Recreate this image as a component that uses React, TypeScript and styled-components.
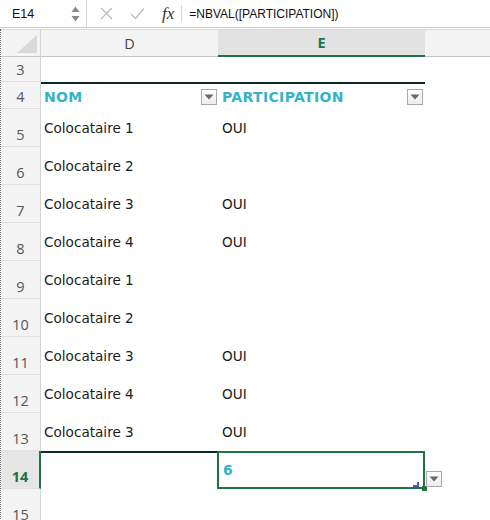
import * as React from 'react';
import styled, { createGlobalStyle } from 'styled-components';

const GlobalStyle = createGlobalStyle`
  body {
    margin: 0;
    background: #fff;
    font-family: "DejaVu Sans", Verdana, sans-serif;
  }
`;

const colors = {
  green: '#217346',
  teal: '#34b3c8',
  text: '#1b1b1b',
  head: '#f4f4f4',
  headLine: '#e1e1e1',
  dark: '#0d2626',
};

const Window = styled.div`
  width: 490px;
  height: 520px;
  overflow: hidden;
  background: #fff;
`;

const FormulaBar = styled.div`
  display: flex;
  align-items: center;
  height: 27px;
  border-bottom: 1px solid #c8c8c8;
  font-family: "Liberation Sans", Arial, sans-serif;
  font-size: 12px;
  color: #111;
`;

const NameBox = styled.div`
  display: flex;
  align-items: center;
  justify-content: space-between;
  width: 87px;
  height: 100%;
  box-sizing: border-box;
  padding: 0 6px 0 12px;
  border-right: 1px solid #d8d8d8;
  font-size: 12.5px;
`;

const BarIcon = styled.span<{ $left: number }>`
  display: flex;
  align-items: center;
  margin-left: ${({ $left }) => $left}px;
`;

const Fx = styled.span`
  margin-left: 17px;
  padding-right: 7px;
  border-right: 1px solid #d8d8d8;
  font-family: "Liberation Serif", "Times New Roman", serif;
  font-style: italic;
  font-size: 17px;
  color: #333;
  line-height: 17px;
`;

const Formula = styled.span`
  margin-left: 7px;
`;

const Sheet = styled.div`
  margin-top: 1px;
  border-left: 1px dotted #666;
`;

const Row = styled.div<{ $h: number }>`
  display: flex;
  height: ${({ $h }) => $h}px;
`;

const Corner = styled.div`
  width: 40px;
  box-sizing: border-box;
  border-right: 1px solid #d4d4d4;
  border-top: 1px solid #d6d6d6;
  border-bottom: 1px solid #c8c8c8;
  background: ${colors.head};
  display: flex;
  align-items: flex-end;
  justify-content: flex-end;
  padding: 0 3px 3px 0;
`;

const ColHead = styled.div<{ $w?: number; $active?: boolean }>`
  ${({ $w }) => ($w ? `width: ${$w}px;` : 'flex: 1;')}
  box-sizing: border-box;
  display: flex;
  align-items: center;
  justify-content: center;
  border-top: 1px solid #d6d6d6;
  border-bottom: ${({ $active }) => ($active ? `2px solid ${colors.green}` : '1px solid #c4c4c4')};
  background: ${({ $active }) => ($active ? '#e2e2e2' : colors.head)};
  color: ${({ $active }) => ($active ? colors.green : '#444')};
  font-family: "Open Sans", Arial, sans-serif;
  font-weight: ${({ $active }) => ($active ? 700 : 400)};
  font-size: 14.5px;
`;

const RowHead = styled.div<{ $active?: boolean }>`
  width: 40px;
  flex-shrink: 0;
  box-sizing: border-box;
  display: flex;
  align-items: flex-end;
  justify-content: center;
  padding-bottom: 2px;
  border-right: ${({ $active }) => ($active ? `2px solid ${colors.green}` : '1px solid #d4d4d4')};
  border-bottom: 1px solid ${colors.headLine};
  background: ${({ $active }) => ($active ? '#e6e6e6' : colors.head)};
  color: ${({ $active }) => ($active ? colors.green : '#555')};
  font-family: "Open Sans", Arial, sans-serif;
  font-weight: ${({ $active }) => ($active ? 700 : 400)};
  font-size: 14.5px;
`;

const Cell = styled.div<{ $w: number; $top?: boolean; $pad?: number }>`
  width: ${({ $w }) => $w}px;
  flex-shrink: 0;
  box-sizing: border-box;
  display: flex;
  align-items: center;
  padding-left: ${({ $pad = 3 }) => $pad}px;
  border-top: ${({ $top }) => ($top ? `2px solid ${colors.dark}` : 'none')};
  color: ${colors.text};
  font-size: 13.6px;
`;

const HeaderCell = styled(Cell)`
  justify-content: space-between;
  padding-right: 1px;
  color: ${colors.teal};
  font-weight: 700;
  font-size: 14px;
  letter-spacing: 0.35px;
`;

const SelectedCell = styled(Cell)`
  position: relative;
  border: 2px solid ${colors.green};
  width: ${({ $w }) => $w + 1}px;
  color: ${colors.teal};
  font-weight: 700;
  font-size: 14px;
`;

const FillHandle = styled.span`
  position: absolute;
  right: -4px;
  bottom: -4px;
  width: 5px;
  height: 5px;
  background: ${colors.green};
`;

const CursorMark = styled.span`
  position: absolute;
  right: 4px;
  bottom: 0px;
  width: 3px;
  height: 5px;
  border-right: 2px solid #4a5bb0;
  box-sizing: border-box;
  &:after {
    content: '';
    position: absolute;
    right: 0;
    bottom: 0;
    width: 4px;
    height: 2px;
    background: #4a5bb0;
  }
`;

const FilterButton = styled.span<{ $float?: boolean }>`
  width: 16px;
  height: 16px;
  box-sizing: border-box;
  display: flex;
  align-items: center;
  justify-content: center;
  border: 1px solid #a8a8a8;
  background: linear-gradient(#fefefe, #ececec);
  ${({ $float }) => ($float ? 'position: absolute; right: -19px; bottom: 0;' : '')}
`;

const Filter = ({ float }: { float?: boolean }) => (
  <FilterButton $float={float}>
    <svg width="10" height="6" viewBox="0 0 10 6">
      <polygon points="0.5,0.5 9.5,0.5 5,5.5" fill="#6a6a6a" />
    </svg>
  </FilterButton>
);

const rows = [
  { n: 5, nom: 'Colocataire 1', part: 'OUI' },
  { n: 6, nom: 'Colocataire 2', part: '' },
  { n: 7, nom: 'Colocataire 3', part: 'OUI' },
  { n: 8, nom: 'Colocataire 4', part: 'OUI' },
  { n: 9, nom: 'Colocataire 1', part: '' },
  { n: 10, nom: 'Colocataire 2', part: '' },
  { n: 11, nom: 'Colocataire 3', part: 'OUI' },
  { n: 12, nom: 'Colocataire 4', part: 'OUI' },
  { n: 13, nom: 'Colocataire 3', part: 'OUI' },
];

const D = 177;
const E = 207;

const App = () => (
  <Window>
    <GlobalStyle />
    <FormulaBar>
      <NameBox>
        E14
        <svg width="9" height="18" viewBox="0 0 9 18">
          <polygon points="4.5,1.5 8.5,7 0.5,7" fill="#8a8a8a" />
          <polygon points="0.5,11 8.5,11 4.5,16.5" fill="#8a8a8a" />
        </svg>
      </NameBox>
      <BarIcon $left={13}>
        <svg width="13" height="13" viewBox="0 0 13 13">
          <path d="M1 1 L12 12 M12 1 L1 12" stroke="#bdbdbd" strokeWidth="1.4" />
        </svg>
      </BarIcon>
      <BarIcon $left={17}>
        <svg width="15" height="13" viewBox="0 0 15 13">
          <path d="M1 7 L5.5 11.5 L14 1.5" stroke="#bdbdbd" strokeWidth="1.4" fill="none" />
        </svg>
      </BarIcon>
      <Fx>fx</Fx>
      <Formula>=NBVAL([PARTICIPATION])</Formula>
    </FormulaBar>

    <Sheet>
      <Row $h={28}>
        <Corner>
          <svg width="20" height="18" viewBox="0 0 20 18">
            <polygon points="20,0 20,18 0,18" fill="#d9d9d9" />
          </svg>
        </Corner>
        <ColHead $w={D}>D</ColHead>
        <ColHead $w={E} $active>E</ColHead>
        <ColHead />
      </Row>

      <Row $h={25}>
        <RowHead>3</RowHead>
      </Row>

      <Row $h={27}>
        <RowHead>4</RowHead>
        <HeaderCell $w={D} $top>
          NOM
          <Filter />
        </HeaderCell>
        <HeaderCell $w={E} $top $pad={4} style={{ paddingRight: 2 }}>
          PARTICIPATION
          <Filter />
        </HeaderCell>
      </Row>

      {rows.map(({ n, nom, part }) => (
        <Row $h={38} key={n}>
          <RowHead>{n}</RowHead>
          <Cell $w={D}>{nom}</Cell>
          <Cell $w={E} $pad={4}>{part}</Cell>
        </Row>
      ))}

      <Row $h={38}>
        <RowHead $active>14</RowHead>
        <Cell $w={D - 1} $top />
        <SelectedCell $w={E} $pad={4}>
          6
          <CursorMark />
          <FillHandle />
          <Filter float />
        </SelectedCell>
      </Row>

      <Row $h={38}>
        <RowHead>15</RowHead>
      </Row>
    </Sheet>
  </Window>
);

export default App;
